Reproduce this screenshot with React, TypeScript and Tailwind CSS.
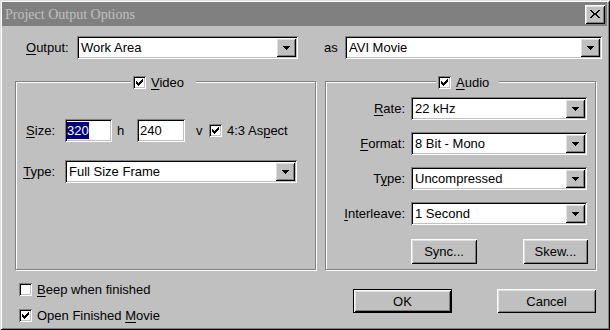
import React from 'react';

const sunken =
  'shadow-[inset_1px_1px_0_#808080,inset_-1px_-1px_0_#ffffff,inset_2px_2px_0_#000000,inset_-2px_-2px_0_#c0c0c0]';
const raised =
  'shadow-[inset_1px_1px_0_#ffffff,inset_-1px_-1px_0_#000000,inset_2px_2px_0_#dfdfdf,inset_-2px_-2px_0_#808080]';

function U({ children }: { children: React.ReactNode }) {
  return <span className="underline decoration-1 underline-offset-2">{children}</span>;
}

function Arrow() {
  return (
    <svg width="7" height="4" viewBox="0 0 7 4" shapeRendering="crispEdges">
      <path d="M0 0h7v1H0zM1 1h5v1H1zM2 2h3v1H2zM3 3h1v1H3z" fill="#000" />
    </svg>
  );
}

function CloseGlyph() {
  return (
    <svg width="10" height="8" viewBox="0 0 10 8" shapeRendering="crispEdges">
      <path
        d="M0 0h2v1H0zM8 0h2v1H8zM1 1h2v1H1zM7 1h2v1H7zM2 2h2v1H2zM6 2h2v1H6zM3 3h4v2H3zM2 5h2v1H2zM6 5h2v1H6zM1 6h2v1H1zM7 6h2v1H7zM0 7h2v1H0zM8 7h2v1H8z"
        fill="#000"
      />
    </svg>
  );
}

function Check({ checked }: { checked?: boolean }) {
  return (
    <span className={`flex h-[13px] w-[13px] shrink-0 items-center justify-center bg-white ${sunken}`}>
      {checked && (
        <svg width="7" height="7" viewBox="0 0 7 7" shapeRendering="crispEdges">
          <path
            d="M6 0h1v1H6zM5 1h2v1H5zM0 2h1v1H0zM4 2h3v1H4zM0 3h2v1H0zM3 3h3v1H3zM0 4h5v1H0zM1 5h3v1H1zM2 6h1v1H2z"
            fill="#000"
          />
        </svg>
      )}
    </span>
  );
}

function Combo({ value, className = '' }: { value: string; className?: string }) {
  return (
    <div className={`flex h-[23px] items-stretch bg-white p-[2px] ${sunken} ${className}`}>
      <span className="flex-1 truncate pl-[2px] leading-[19px]">{value}</span>
      <span className={`flex w-[20px] items-center justify-center bg-[#c0c0c0] ${raised}`}>
        <Arrow />
      </span>
    </div>
  );
}

function Button({ children, className = '', isDefault }: { children: React.ReactNode; className?: string; isDefault?: boolean }) {
  return (
    <div className={`${isDefault ? 'border border-black' : ''} ${className}`}>
      <div className={`flex h-full w-full items-center justify-center bg-[#c0c0c0] ${raised}`}>{children}</div>
    </div>
  );
}

export default function App() {
  return (
    <div
      className={`flex h-[330px] w-[610px] flex-col bg-[#c0c0c0] pb-[3px] pl-[2px] pr-[3px] pt-[2px] font-['Liberation_Sans',Arial,sans-serif] text-[13px] leading-[15px] text-black shadow-[inset_1px_1px_0_#dfdfdf,inset_-1px_-1px_0_#000000,inset_2px_2px_0_#ffffff,inset_-2px_-2px_0_#808080]`}
    >
      {/* Title bar */}
      <div className="flex h-[24px] shrink-0 items-center bg-[#808080] pl-[3px] pr-[2px]">
        <span className="flex-1 font-['Liberation_Serif',serif] text-[14px] text-[#c0c0c0]">Project Output Options</span>
        <span className={`flex h-[19px] w-[20px] items-center justify-center bg-[#c0c0c0] ${raised}`}>
          <CloseGlyph />
        </span>
      </div>

      {/* Output row */}
      <div className="mt-[10px] flex items-center pl-[24px]">
        <span className="w-[51px]">
          <U>O</U>utput:
        </span>
        <Combo value="Work Area" className="w-[221px]" />
        <span className="w-[47px] pl-[26px]">as</span>
        <Combo value="AVI Movie" className="w-[257px]" />
      </div>

      {/* Group boxes */}
      <div className="mt-[22px] flex gap-[9px] pl-[13px]">
        <div className="relative h-[189px] w-[301px] border border-[#808080] shadow-[1px_1px_0_#ffffff,inset_1px_1px_0_#ffffff]">
          <div className="absolute -top-[7px] left-[115px] flex items-center gap-[5px] bg-[#c0c0c0] pl-[2px] pr-[12px]">
            <Check checked />
            <span>
              <U>V</U>ideo
            </span>
          </div>
          <div className="flex flex-col pt-[37px]">
            <div className="flex items-center">
              <span className="w-[49px] pr-[10px] text-right">
                <U>S</U>ize:
              </span>
              <div className={`flex h-[23px] w-[47px] items-center bg-white px-[2px] ${sunken}`}>
                <span className="bg-[#000080] leading-[17px] text-white">320</span>
              </div>
              <span className="w-[25px] pl-[5px]">h</span>
              <div className={`flex h-[23px] w-[48px] items-center bg-white px-[3px] ${sunken}`}>240</div>
              <span className="w-[24px] pl-[11px]">v</span>
              <Check checked />
              <span className="pl-[5px]">
                4:3 As<U>p</U>ect
              </span>
            </div>
            <div className="mt-[18px] flex items-center">
              <span className="w-[49px] pr-[10px] text-right">
                <U>T</U>ype:
              </span>
              <Combo value="Full Size Frame" className="w-[232px]" />
            </div>
          </div>
        </div>

        <div className="relative h-[189px] w-[271px] border border-[#808080] shadow-[1px_1px_0_#ffffff,inset_1px_1px_0_#ffffff]">
          <div className="absolute -top-[7px] left-[110px] flex items-center gap-[5px] bg-[#c0c0c0] pl-[2px] pr-[10px]">
            <Check checked />
            <span>
              <U>A</U>udio
            </span>
          </div>
          <div className="flex flex-col gap-[12px] pt-[15px]">
            {[
              ['R', 'ate:', '', '22 kHz'],
              ['F', 'ormat:', '', '8 Bit - Mono'],
              ['T', 'pe:', 'y', 'Uncompressed'],
              ['I', 'nterleave:', '', '1 Second'],
            ].map(([a, rest, mid, value]) => (
              <div key={value} className="flex items-center">
                <span className="w-[85px] pr-[6px] text-right">
                  {mid ? (
                    <>
                      {a}
                      <U>{mid}</U>
                      {rest}
                    </>
                  ) : (
                    <>
                      <U>{a}</U>
                      {rest}
                    </>
                  )}
                </span>
                <Combo value={value} className="w-[176px]" />
              </div>
            ))}
          </div>
          <div className="mt-[14px] flex gap-[46px] pl-[85px]">
            <Button className="h-[25px] w-[66px]">Sync...</Button>
            <Button className="h-[25px] w-[65px]">Skew...</Button>
          </div>
        </div>
      </div>

      {/* Bottom */}
      <div className="flex">
        <div className="flex w-[351px] flex-col gap-[11px] pl-[17px] pt-[12px]">
          <div className="flex items-center gap-[5px]">
            <Check />
            <span>
              <U>B</U>eep when finished
            </span>
          </div>
          <div className="flex items-center gap-[5px]">
            <Check checked />
            <span>
              Open Finished <U>M</U>ovie
            </span>
          </div>
        </div>
        <div className="flex gap-[45px] pt-[19px]">
          <Button isDefault className="h-[24px] w-[99px]">
            OK
          </Button>
          <Button className="h-[24px] w-[99px]">Cancel</Button>
        </div>
      </div>
    </div>
  );
}
